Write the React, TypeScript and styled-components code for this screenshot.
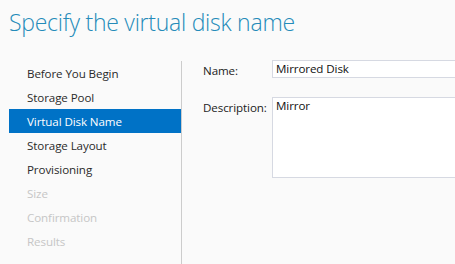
import React from 'react';
import styled, { createGlobalStyle } from 'styled-components';

const GlobalStyle = createGlobalStyle`
  html, body {
    margin: 0;
    padding: 0;
    background: #fafafa;
  }
  body {
    font-family: 'Open Sans', 'Noto Sans', sans-serif;
    overflow: hidden;
  }
`;

const Page = styled.div`
  width: 455px;
  height: 264px;
  display: flex;
  flex-direction: column;
  background: #fafafa;
  overflow: hidden;
`;

const Title = styled.h1`
  margin: 0;
  padding: 6px 0 0 9px;
  height: 55px;
  box-sizing: border-box;
  font-size: 23px;
  font-weight: 300;
  color: #248bb9;
  white-space: nowrap;
  letter-spacing: -0.25px;
`;

const Body = styled.div`
  flex: 1;
  display: flex;
  padding-top: 6px;
`;

const Nav = styled.ul`
  list-style: none;
  margin: 0;
  padding: 0 0 0 9px;
  width: 172px;
  border-right: 1px solid #cccccc;
`;

const NavItem = styled.li<{ $active?: boolean; $disabled?: boolean }>`
  height: 24px;
  display: flex;
  align-items: center;
  padding-left: 18px;
  font-size: 11.6px;
  letter-spacing: -0.1px;
  background: ${({ $active }) => ($active ? '#0072c6' : 'transparent')};
  color: ${({ $active, $disabled }) =>
    $active ? '#ffffff' : $disabled ? '#c6c6c6' : '#2a2a2a'};
`;

const Form = styled.div`
  flex: 1;
  display: flex;
  flex-direction: column;
  gap: 19px;
  padding-left: 21px;
  margin-top: -1px;
`;

const Row = styled.div`
  display: flex;
  align-items: flex-start;
`;

const Label = styled.label`
  width: 69px;
  flex-shrink: 0;
  font-size: 11.6px;
  letter-spacing: -0.1px;
  line-height: 15px;
  color: #222222;
  padding-top: 3px;
`;

const Field = styled.div<{ $height: number }>`
  flex: 1;
  height: ${({ $height }) => $height}px;
  box-sizing: border-box;
  margin-right: -20px;
  background: #ffffff;
  border: 1px solid #d6d9e2;
  padding: 0 3px;
  font-size: 11.6px;
  letter-spacing: -0.1px;
  color: #111111;
  line-height: 16px;
`;

const steps = [
  { name: 'Before You Begin' },
  { name: 'Storage Pool' },
  { name: 'Virtual Disk Name', active: true },
  { name: 'Storage Layout' },
  { name: 'Provisioning' },
  { name: 'Size', disabled: true },
  { name: 'Confirmation', disabled: true },
  { name: 'Results', disabled: true },
];

export default function App() {
  return (
    <Page>
      <GlobalStyle />
      <Title>Specify the virtual disk name</Title>
      <Body>
        <Nav>
          {steps.map((s) => (
            <NavItem key={s.name} $active={s.active} $disabled={s.disabled}>
              {s.name}
            </NavItem>
          ))}
        </Nav>
        <Form>
          <Row>
            <Label>Name:</Label>
            <Field $height={18}>Mirrored Disk</Field>
          </Row>
          <Row>
            <Label>Description:</Label>
            <Field $height={81}>Mirror</Field>
          </Row>
        </Form>
      </Body>
    </Page>
  );
}
